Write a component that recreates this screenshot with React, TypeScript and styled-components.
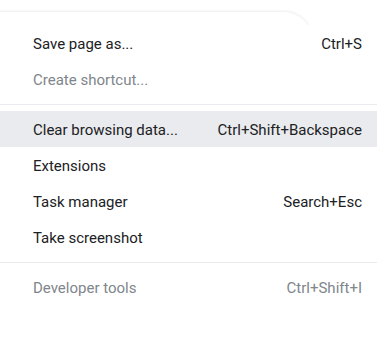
import React from "react";
import styled, { createGlobalStyle } from "styled-components";

type Item = { label: string; shortcut?: string; disabled?: boolean; active?: boolean };

const groups: Item[][] = [
  [
    { label: "Save page as...", shortcut: "Ctrl+S" },
    { label: "Create shortcut...", disabled: true },
  ],
  [
    { label: "Clear browsing data...", shortcut: "Ctrl+Shift+Backspace", active: true },
    { label: "Extensions" },
    { label: "Task manager", shortcut: "Search+Esc" },
    { label: "Take screenshot" },
  ],
  [{ label: "Developer tools", shortcut: "Ctrl+Shift+I", disabled: true }],
];

const App = () => {
  return (
    <>
      <GlobalStyle />
      <Page>
        <Edge>
          <EdgeCurve />
        </Edge>
        <Menu>
          {groups.map((group, gi) => (
            <React.Fragment key={gi}>
              {gi > 0 && <Separator />}
              {group.map((item) => (
                <Row key={item.label} $active={item.active} $disabled={item.disabled}>
                  <span>{item.label}</span>
                  {item.shortcut && <Shortcut>{item.shortcut}</Shortcut>}
                </Row>
              ))}
            </React.Fragment>
          ))}
        </Menu>
      </Page>
    </>
  );
};

export default App;

const GlobalStyle = createGlobalStyle`
  body {
    margin: 0;
    background: #ffffff;
    font-family: Roboto, "Liberation Sans", sans-serif;
  }
`;

const Page = styled.div`
  width: 377px;
  height: 345px;
  overflow: hidden;
  background: #ffffff;
`;

const Edge = styled.div`
  position: relative;
  height: 25px;
  overflow: hidden;
`;

const EdgeCurve = styled.div`
  position: absolute;
  left: -20px;
  top: 12px;
  width: 332px;
  height: 40px;
  background: #ffffff;
  border-top-right-radius: 28px;
  box-shadow: 0 -1px 3px rgba(0, 0, 0, 0.08);
`;

const Menu = styled.div`
  display: flex;
  flex-direction: column;
`;

const Row = styled.div<{ $active?: boolean; $disabled?: boolean }>`
  height: 36px;
  display: flex;
  align-items: center;
  justify-content: space-between;
  padding: 2px 15px 0 33px;
  box-sizing: border-box;
  font-size: 15px;
  color: ${(p) => (p.$disabled ? "#80868b" : "#202124")};
  background: ${(p) => (p.$active ? "#eaebee" : "transparent")};
`;

const Shortcut = styled.span`
  white-space: nowrap;
`;

const Separator = styled.div`
  height: 1px;
  margin: 7px 0 6px;
  background: #e8eaed;
`;
